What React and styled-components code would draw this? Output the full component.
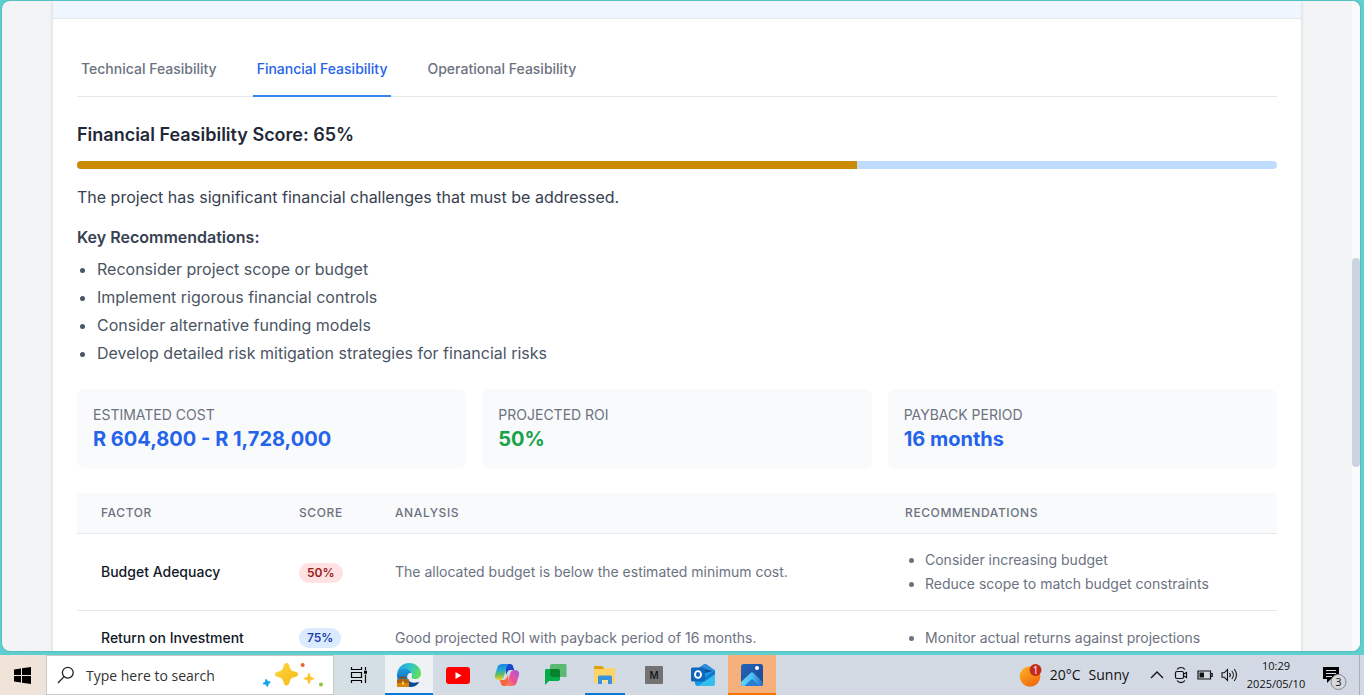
import React, { useState } from "react";
import styled, { createGlobalStyle } from "styled-components";

const GlobalStyle = createGlobalStyle`
  *, *::before, *::after { box-sizing: border-box; }
  html, body { margin: 0; padding: 0; }
  body { font-family: Inter, "Liberation Sans", sans-serif; color: #1f2937; }
  button, input { font: inherit; color: inherit; margin: 0; }
  h2, h3, p, ul, dl, dd { margin: 0; padding: 0; }
`;

const Desktop = styled.div`
  display: flex;
  flex-direction: column;
  height: 100vh;
  background: #5fcfd0;
`;

const BrowserWindow = styled.div`
  flex: 1;
  min-height: 0;
  display: flex;
  margin: 1px 4px 4px 2px;
  border-radius: 8px;
  overflow: hidden;
  background: #f3f4f6;
  box-shadow: 0 0 2px rgba(0, 60, 60, 0.35);
`;

const Page = styled.main`
  flex: 1;
  min-width: 0;
  overflow: hidden;
`;

const Container = styled.div`
  max-width: 1280px;
  margin: 0 auto;
  padding: 0 16px;
`;

const Card = styled.section`
  background: #fff;
  box-shadow: 0 0 4px rgba(0, 0, 0, 0.14);
`;

const CardBanner = styled.div`
  height: 18px;
  background: #eff6ff;
  border-bottom: 1px solid #e5e7eb;
`;

const CardBody = styled.div`
  padding: 24px;
`;

const ScrollTrack = styled.div`
  width: 8px;
  display: flex;
  flex-direction: column;
  background: #f8fafc;
  &::before { content: ""; flex: 257; }
  &::after { content: ""; flex: 184; }
`;

const ScrollThumb = styled.div`
  flex: 209;
  border-radius: 4px;
  background: #cbd5e1;
`;

const TabList = styled.div`
  display: flex;
  gap: 32px;
  border-bottom: 1px solid #e5e7eb;
`;

const Tab = styled.button`
  margin-bottom: -1px;
  padding: 16px 4px;
  border: 0;
  border-bottom: 2px solid ${(p) => (p.$active ? "#3b82f6" : "transparent")};
  background: none;
  color: ${(p) => (p.$active ? "#2563eb" : "#6b7280")};
  font-size: 14px;
  font-weight: 500;
  line-height: 20px;
  cursor: pointer;
`;

const ScoreHeading = styled.h2`
  margin-top: 24px;
  color: #1f2937;
  font-size: 18px;
  font-weight: 600;
  line-height: 28px;
`;

const Meter = styled.div`
  height: 8px;
  margin-top: 12px;
  border-radius: 4px;
  overflow: hidden;
  background: #bfdbfe;
`;

const MeterFill = styled.div`
  height: 100%;
  background: #ca8a04;
`;

const Summary = styled.p`
  margin-top: 16px;
  color: #374151;
  font-size: 16px;
  line-height: 24px;
`;

const SubHeading = styled.h3`
  margin-top: 16px;
  color: #374151;
  font-size: 16px;
  font-weight: 600;
  line-height: 24px;
`;

const BulletList = styled.ul`
  display: flex;
  flex-direction: column;
  gap: 4px;
  margin-top: ${(p) => (p.$compact ? 0 : 8)}px;
  padding-left: 20px;
  list-style: disc;
  color: ${(p) => (p.$compact ? "#6b7280" : "#4b5563")};
  font-size: ${(p) => (p.$compact ? 14 : 16)}px;
  line-height: ${(p) => (p.$compact ? 20 : 24)}px;
`;

const StatGrid = styled.dl`
  display: grid;
  grid-template-columns: repeat(3, minmax(0, 1fr));
  gap: 16px;
  margin-top: 24px;
`;

const StatCard = styled.div`
  padding: 16px;
  border-radius: 8px;
  background: #f9fafb;
`;

const StatLabel = styled.dt`
  color: #6b7280;
  font-size: 14px;
  line-height: 20px;
  text-transform: uppercase;
`;

const StatValue = styled.dd`
  color: ${(p) => (p.$positive ? "#16a34a" : "#2563eb")};
  font-size: 20px;
  font-weight: 700;
  line-height: 28px;
`;

const FactorTable = styled.table`
  width: 100%;
  margin-top: 24px;
  table-layout: fixed;
  border-spacing: 0;
  text-align: left;
`;

const HeadCell = styled.th`
  width: ${(p) => p.$width};
  padding: 12px 24px;
  border-bottom: 1px solid #e5e7eb;
  background: #f9fafb;
  color: #6b7280;
  font-size: 12px;
  font-weight: 500;
  line-height: 16px;
  letter-spacing: 0.05em;
  text-transform: uppercase;
`;

const Cell = styled.td`
  padding: 16px 24px;
  border-bottom: 1px solid #e5e7eb;
  color: #6b7280;
  font-size: 14px;
  line-height: 20px;
  white-space: nowrap;
`;

const FactorCell = styled(Cell).attrs({ as: "th", scope: "row" })`
  color: #111827;
  font-weight: 500;
`;

const Badge = styled.span`
  display: inline-flex;
  padding: 0 8px;
  border-radius: 10px;
  vertical-align: middle;
  background: ${(p) => (p.$low ? "#fee2e2" : "#dbeafe")};
  color: ${(p) => (p.$low ? "#991b1b" : "#1e40af")};
  font-size: 12px;
  font-weight: 600;
  line-height: 20px;
`;

const Taskbar = styled.footer`
  display: flex;
  height: 40px;
  background: linear-gradient(90deg, #f1e3d8 0, #eee3da 46px, #d5e0e5 334px, #d2dae3 480px, #d3d9e4 100%);
  color: #111;
  font-family: "Open Sans", "Noto Sans", sans-serif;
`;

const StartButton = styled.button`
  width: 46px;
  display: grid;
  place-items: center;
  padding: 0 2px 0 0;
  border: 0;
  background: none;
`;

const SearchBox = styled.label`
  width: 288px;
  display: flex;
  align-items: center;
  gap: 11px;
  padding: 0 9px 0 10px;
  border: 1px solid #c8c8c8;
  background: #fff;
`;

const SearchInput = styled.input`
  flex: 1;
  min-width: 0;
  padding: 2px 0 0;
  border: 0;
  outline: 0;
  background: none;
  font-size: 14px;
  line-height: 20px;
  &::placeholder { color: #333; opacity: 1; }
`;

const AppStrip = styled.nav`
  display: flex;
  gap: 1px;
`;

const AppButton = styled.button`
  width: ${(p) => (p.$wide ? 50 : 48)}px;
  height: 40px;
  display: flex;
  flex-direction: column;
  align-items: center;
  padding: 2px 0 0;
  border: 0;
  background: ${(p) => (p.$alert ? "#f6b07c" : p.$active ? "#eef2f5" : "none")};
  svg { margin: auto; }
  &::after {
    content: "";
    width: ${(p) => (p.$active || p.$alert ? 48 : 40)}px;
    height: 2px;
    background: ${(p) => (p.$alert ? "#f97400" : p.$active || p.$running ? "#0a78d6" : "transparent")};
  }
`;

const Tray = styled.div`
  display: flex;
  align-items: center;
  margin-left: auto;
  padding-right: 4px;
`;

const TrayButton = styled.button`
  width: 24px;
  height: 40px;
  display: grid;
  place-items: center;
  padding: 0;
  border: 0;
  background: none;
`;

const WeatherButton = styled.button`
  display: flex;
  align-items: center;
  gap: 8px;
  height: 40px;
  margin-right: 16px;
  padding: 0;
  border: 0;
  background: none;
  font-size: 14px;
  line-height: 20px;
`;

const Clock = styled.button`
  width: 70px;
  height: 40px;
  padding: 0;
  border: 0;
  background: none;
  font-size: 11px;
  line-height: 18px;
  text-align: center;
  span { display: block; }
`;

const NotificationButton = styled(TrayButton)`
  width: 49px;
  border-right: 1px solid #a9afb8;
`;

const WindowsIcon = () => (
  <svg width="17" height="17" viewBox="0 0 17 17" aria-hidden="true">
    <path d="M0 2.4 7 1.4V8H0zM8 1.3 17 0v8H8zM0 9h7v6.6L0 14.6zM8 9h9v8l-9-1.3z" fill="#000" />
  </svg>
);

const SearchIcon = () => (
  <svg width="18" height="18" viewBox="0 0 18 18" fill="none" stroke="#222" strokeWidth="1.3" aria-hidden="true">
    <circle cx="10.8" cy="6.7" r="5.4" />
    <path d="M7 10.6 1 17" />
  </svg>
);

const SparkleIcon = () => (
  <svg width="62" height="28" viewBox="0 0 62 28" aria-hidden="true">
    <defs>
      <linearGradient id="gold" x1="0" y1="0" x2="1" y2="1">
        <stop offset="0" stopColor="#ffd83c" />
        <stop offset="1" stopColor="#f5b617" />
      </linearGradient>
    </defs>
    <path d="M24.500 2c2 0 2.400 1.200 3 3.500 1 3.500 1.500 4 5.200 5.100 2.300.7 3.300 1.200 3.300 2.700s-1 2-3.300 2.700c-3.700 1.100-4.200 1.600-5.200 5.100-.6 2.300-1 3.500-3 3.500s-2.400-1.200-3-3.500c-1-3.500-1.500-4-5.200-5.100-2.300-.7-3.300-1.200-3.300-2.700s1-2 3.300-2.700c3.700-1.100 4.200-1.600 5.200-5.100.6-2.300 1-3.500 3-3.500z" fill="url(#gold)" />
    <path d="M47 12c1 0 1.200 3.300 1.800 3.900.6.500 3.700.7 3.700 1.700s-3.100 1.100-3.700 1.700c-.6.600-.8 3.700-1.800 3.700s-1.200-3.100-1.800-3.700c-.6-.6-3.700-.7-3.700-1.700s3.100-1.200 3.700-1.700c.6-.6.8-3.900 1.800-3.900z" fill="#ffc42b" />
    <path d="M4 18c1 0 1.300 1.700 1.900 2.100.7.400 2.600 0 2.700 1.100.1 1-1.600 1.200-2 1.900-.4.700 0 2.600-1 2.700-1.100.1-1.400-1.800-2-2.100-.8-.4-2.600 0-2.800-1-.1-1.200 1.700-1.300 2.100-2C3.200 20 3 18.100 4 18z" fill="#15a4ee" />
    <circle cx="40.700" cy="4" r="2" fill="#f1602c" />
    <circle cx="59" cy="23.500" r="2" fill="#8cc63f" />
  </svg>
);

const TaskViewIcon = () => (
  <svg width="18" height="18" viewBox="0 0 18 18" fill="none" stroke="#000" strokeWidth="1.2" aria-hidden="true">
    <path d="M1.500 1v2.500h10V1M1.500 17v-2.500h10V17M1.500 6.500h10v5h-10zM15.500 1v3M15.500 8.500V17" />
    <path d="M14 4.700h3v3h-3z" fill="#000" stroke="none" />
  </svg>
);

const EdgeIcon = () => (
  <svg width="26" height="26" viewBox="0 0 26 26" aria-hidden="true">
    <defs>
      <linearGradient id="edgeTop" x1="0" y1="0.2" x2="1" y2=".5">
        <stop offset="0" stopColor="#1b9fe0" />
        <stop offset=".5" stopColor="#2fc5cb" />
        <stop offset="1" stopColor="#63de58" />
      </linearGradient>
      <linearGradient id="edgeSide" x1="0" y1="0" x2="0" y2="1">
        <stop offset="0" stopColor="#1e9be0" />
        <stop offset="1" stopColor="#0c58a8" />
      </linearGradient>
    </defs>
    <path d="M1 12C2 5 7 1 13 1c7 0 12 5 12 10 0 4-2.500 6-6 6-2.500 0-4-.8-3.500-2 1.500-3.500-.5-6-4-6.500C6 8 2 10 1 12z" fill="url(#edgeTop)" />
    <path d="M1 12c1.500-4 5.500-6 9.500-5 3 .8 4.500 2.300 4.800 4-2.500-.5-4.300 1.300-4.100 4 .3 4.300 5.300 7 10.800 5-3 4-8 5.500-13 3.500C3 22 .500 17 1 12z" fill="url(#edgeSide)" />
    <path d="M13 20.500c3.500 1.300 7.500.8 10.500-1-2 4-6 6-10.500 5.500z" fill="#0b4a94" />
    <path d="M4.500 17.500v-2h5v2" fill="none" stroke="#8a4c0a" strokeWidth="1.300" />
    <path d="M1 17.500h12V25H1z" fill="#dc8610" />
    <path d="M1 17.500h12V21H1z" fill="#ad620b" />
    <path d="M6 19.500h2v3H6z" fill="#ffd24a" />
  </svg>
);

const YouTubeIcon = () => (
  <svg width="24" height="17" viewBox="0 0 24 17" aria-hidden="true">
    <rect width="24" height="17" rx="3" fill="#f00" />
    <path d="m9.500 5 6 3.500-6 3.500z" fill="#fff" />
  </svg>
);

const CopilotIcon = () => (
  <svg width="26" height="24" viewBox="0 0 26 24" aria-hidden="true">
    <defs>
      <linearGradient id="copLeft" x1="0" y1="0" x2="0" y2="1">
        <stop offset="0" stopColor="#1b86e8" />
        <stop offset=".35" stopColor="#22a7d8" />
        <stop offset=".65" stopColor="#5cbf62" />
        <stop offset="1" stopColor="#f5cf24" />
      </linearGradient>
      <linearGradient id="copRight" x1="1" y1="0" x2="0" y2="1">
        <stop offset="0" stopColor="#a458ee" />
        <stop offset=".55" stopColor="#f05290" />
        <stop offset="1" stopColor="#fb9a4a" />
      </linearGradient>
    </defs>
    <path d="M11 1h5c2 0 2.800 1 3.300 3l.9 3h-3.500c-2 0-3 1-3.700 3l-1 2z" fill="#1648c8" />
    <path d="M15 23h-5c-2 0-2.800-1-3.300-3l-.9-3h3.500c2 0 3-1 3.700-3l1-2z" fill="#f4683e" />
    <path d="M8.500 1H15c-2 1-2.500 3-3.200 5.500L10 13c-.8 2.800-1.800 4-4.500 4C1.500 17 .400 14.500 1 12L3.500 4C4.300 1.800 6 1 8.500 1z" fill="url(#copLeft)" />
    <path d="M17.500 23H11c2-1 2.500-3 3.200-5.500L16 11c.8-2.800 1.800-4 4.500-4 4 0 5.100 2.500 4.500 5l-2.500 8c-.8 2.200-2.500 3-5 3z" fill="url(#copRight)" />
  </svg>
);

const ChatIcon = () => (
  <svg width="24" height="24" viewBox="0 0 24 24" aria-hidden="true">
    <path d="M2 6h12c1 0 2 .7 2 2v8c0 1.300-.8 2-2 2H5l-4 4V8c0-1 .300-2 1-2z" fill="#05ac48" />
    <path d="M8 1h13c1 0 1.500.5 1.500 1.500V14H8c-1.500 0-2-1-2-2V3c0-1.200.8-2 2-2z" fill="#5bb974" />
    <path d="M6 6h8c1.300 0 2 .7 2 2v6H8c-1.500 0-2-1-2-2z" fill="#07832e" />
  </svg>
);

const FolderIcon = () => (
  <svg width="22" height="20" viewBox="0 0 22 20" aria-hidden="true">
    <path d="M0 1h8l2 2h11v5H0z" fill="#dda117" />
    <path d="M0 4h9l2-1h10v15H0z" fill="#ffd466" />
    <path d="M4 19v-7c0-1 .700-1.500 1.500-1.500h11c.8 0 1.500.5 1.500 1.500v7h-4v-4H8v4z" fill="#3992dc" />
    <path d="M8 15h6v3H8z" fill="#f8df9f" />
  </svg>
);

const LetterTile = styled.span`
  width: 18px;
  height: 18px;
  margin: auto;
  border-radius: 1px;
  background: #737373;
  color: #111;
  font-family: Inter, sans-serif;
  font-size: 10px;
  font-weight: 500;
  line-height: 18px;
`;

const OutlookIcon = () => (
  <svg width="26" height="24" viewBox="0 0 26 24" aria-hidden="true">
    <path d="M5 7.500 13.500 1.600c1-.7 2-.7 3 0L25 7.500V12L5 14z" fill="#1e83d4" />
    <path d="m14 1.500 1-.4c.5 0 1 .2 1.500.5L25 7.500 18 12l-8-6z" fill="#2d8fdc" />
    <path d="m15 6 8 2-6 4-5-3z" fill="#0d4f9c" />
    <path d="M5 10h10l10-2.500V20c0 2-1 3-3 3H8c-2 0-3-1-3-3z" fill="#1798e4" />
    <path d="m8 23 17-12.500V20c0 2-1 3-3 3z" fill="#35bdf0" />
    <path d="m15 14 10-6.500v3.800L15 18z" fill="#1278cc" />
    <rect x="1" y="4.500" width="14" height="14" rx="1.500" fill="#0f66bb" />
    <ellipse cx="8" cy="11.500" rx="3" ry="3.400" fill="none" stroke="#fff" strokeWidth="1.900" />
  </svg>
);

const PhotosIcon = () => (
  <svg width="22" height="22" viewBox="0 0 22 22" aria-hidden="true">
    <defs>
      <linearGradient id="sky" x1="0" y1="0" x2="1" y2="1">
        <stop offset="0" stopColor="#2464ba" />
        <stop offset="1" stopColor="#1d4690" />
      </linearGradient>
      <linearGradient id="slope" x1="0" y1="0" x2="1" y2="0">
        <stop offset="0" stopColor="#62d4f8" />
        <stop offset=".5" stopColor="#4fc0f2" />
        <stop offset="1" stopColor="#2467c4" />
      </linearGradient>
      <clipPath id="photoFrame"><rect width="22" height="22" rx="2.500" /></clipPath>
    </defs>
    <g clipPath="url(#photoFrame)">
      <rect width="22" height="22" fill="url(#sky)" />
      <path d="M0 18 9.500 9c1-1 2-1 3 0L22 18v4H0z" fill="url(#slope)" />
      <path d="m3.500 22 6.500-6.300c.7-.7 1.500-.7 2.200 0L18.500 22z" fill="#2a7fd4" />
      <circle cx="16" cy="4" r="2" fill="#fff" />
    </g>
  </svg>
);

const WeatherIcon = () => (
  <svg width="24" height="26" viewBox="0 0 24 26" aria-hidden="true">
    <defs>
      <linearGradient id="sun" x1="0" y1="0" x2=".6" y2="1">
        <stop offset="0" stopColor="#fbb829" />
        <stop offset="1" stopColor="#f26a0b" />
      </linearGradient>
    </defs>
    <circle cx="12" cy="14.500" r="10.300" fill="url(#sun)" />
    <circle cx="17.500" cy="8" r="6" fill="#c42b1c" />
    <text x="17.500" y="11.500" textAnchor="middle" fontSize="10" fontFamily="Open Sans, sans-serif" fill="#fff">1</text>
  </svg>
);

const ChevronIcon = () => (
  <svg width="14" height="8" viewBox="0 0 14 8" fill="none" stroke="#111" strokeWidth="1.300" aria-hidden="true">
    <path d="m1 7 6-6 6 6" />
  </svg>
);

const MeetIcon = () => (
  <svg width="14" height="18" viewBox="0 0 14 18" fill="none" stroke="#111" strokeWidth="1.200" aria-hidden="true">
    <path d="M3 3.500c2-2.700 6-2.700 8 0M3 14.500c2 2.700 6 2.700 8 0" />
    <rect x="1.500" y="5.500" width="8" height="7" rx="1.500" />
    <path d="m9.500 8 3-1.500v5l-3-1.500" />
  </svg>
);

const BatteryIcon = () => (
  <svg width="16" height="10" viewBox="0 0 16 10" fill="none" stroke="#111" strokeWidth="1.200" aria-hidden="true">
    <path d="M1 1h12.500v8H1zM14 3.500h1.200v3H14" />
    <path d="M2.500 2.500H7v5H2.500z" fill="#111" stroke="none" />
  </svg>
);

const SpeakerIcon = () => (
  <svg width="17" height="14" viewBox="0 0 17 14" fill="none" stroke="#111" strokeWidth="1.100" aria-hidden="true">
    <path d="M1 4.800h2.200L6.500 1.500v11L3.200 9.200H1zM8.500 5c1 1.100 1 2.900 0 4M10.800 3c2 2.300 2 5.700 0 8M13.200 1c3 3.500 3 8.500 0 12" />
  </svg>
);

const NotificationIcon = () => (
  <svg width="26" height="32" viewBox="0 0 26 32" aria-hidden="true">
    <path d="M1 8h16v12H9l-4 4v-4H1z" fill="#000" />
    <path d="M4 11.500h10M4 14.500h10M4 17.500h6" stroke="#d3d9e4" />
    <circle cx="16.500" cy="23" r="7.500" fill="#d6d8db" stroke="#85898f" />
    <text x="16.500" y="27" textAnchor="middle" fontSize="11" fontFamily="Open Sans, sans-serif" fill="#111">3</text>
  </svg>
);

const TABS = ["Technical Feasibility", "Financial Feasibility", "Operational Feasibility"];

const RECOMMENDATIONS = [
  "Reconsider project scope or budget",
  "Implement rigorous financial controls",
  "Consider alternative funding models",
  "Develop detailed risk mitigation strategies for financial risks",
];

const STATS = [
  { label: "Estimated Cost", value: "R 604,800 - R 1,728,000" },
  { label: "Projected ROI", value: "50%", positive: true },
  { label: "Payback Period", value: "16 months" },
];

const COLUMNS = [
  { title: "Factor", width: "198px" },
  { title: "Score", width: "96px" },
  { title: "Analysis", width: "auto" },
  { title: "Recommendations", width: "33%" },
];

const FACTORS = [
  {
    name: "Budget Adequacy",
    score: 50,
    analysis: "The allocated budget is below the estimated minimum cost.",
    actions: ["Consider increasing budget", "Reduce scope to match budget constraints"],
  },
  {
    name: "Return on Investment",
    score: 75,
    analysis: "Good projected ROI with payback period of 16 months.",
    actions: ["Monitor actual returns against projections"],
  },
];

const APPS = [
  { name: "Task View", icon: <TaskViewIcon />, wide: true },
  { name: "Microsoft Edge", icon: <EdgeIcon />, active: true },
  { name: "YouTube", icon: <YouTubeIcon /> },
  { name: "Copilot", icon: <CopilotIcon /> },
  { name: "Google Chat", icon: <ChatIcon /> },
  { name: "File Explorer", icon: <FolderIcon />, running: true },
  { name: "M", icon: <LetterTile>M</LetterTile> },
  { name: "Outlook", icon: <OutlookIcon /> },
  { name: "Photos", icon: <PhotosIcon />, alert: true },
];

function FeasibilityReport() {
  const [activeTab, setActiveTab] = useState(1);
  return (
    <Card>
      <CardBanner />
      <CardBody>
        <TabList role="tablist">
          {TABS.map((label, i) => (
            <Tab key={label} type="button" role="tab" aria-selected={i === activeTab} $active={i === activeTab} onClick={() => setActiveTab(i)}>
              {label}
            </Tab>
          ))}
        </TabList>
        <ScoreHeading>Financial Feasibility Score: 65%</ScoreHeading>
        <Meter role="progressbar" aria-label="Financial feasibility score" aria-valuenow={65} aria-valuemin={0} aria-valuemax={100}>
          <MeterFill style={{ width: "65%" }} />
        </Meter>
        <Summary>The project has significant financial challenges that must be addressed.</Summary>
        <SubHeading>Key Recommendations:</SubHeading>
        <BulletList>
          {RECOMMENDATIONS.map((text) => <li key={text}>{text}</li>)}
        </BulletList>
        <StatGrid>
          {STATS.map((s) => (
            <StatCard key={s.label}>
              <StatLabel>{s.label}</StatLabel>
              <StatValue $positive={s.positive}>{s.value}</StatValue>
            </StatCard>
          ))}
        </StatGrid>
        <FactorTable>
          <thead>
            <tr>
              {COLUMNS.map((c) => <HeadCell key={c.title} scope="col" $width={c.width}>{c.title}</HeadCell>)}
            </tr>
          </thead>
          <tbody>
            {FACTORS.map((f) => (
              <tr key={f.name}>
                <FactorCell>{f.name}</FactorCell>
                <Cell><Badge $low={f.score < 60}>{f.score}%</Badge></Cell>
                <Cell>{f.analysis}</Cell>
                <Cell>
                  <BulletList $compact>
                    {f.actions.map((a) => <li key={a}>{a}</li>)}
                  </BulletList>
                </Cell>
              </tr>
            ))}
          </tbody>
        </FactorTable>
      </CardBody>
    </Card>
  );
}

export default function App() {
  return (
    <Desktop>
      <GlobalStyle />
      <BrowserWindow>
        <Page>
          <Container>
            <FeasibilityReport />
          </Container>
        </Page>
        <ScrollTrack><ScrollThumb /></ScrollTrack>
      </BrowserWindow>
      <Taskbar>
        <StartButton type="button" aria-label="Start"><WindowsIcon /></StartButton>
        <SearchBox>
          <SearchIcon />
          <SearchInput type="text" placeholder="Type here to search" aria-label="Search" />
          <SparkleIcon />
        </SearchBox>
        <AppStrip aria-label="Apps">
          {APPS.map((a) => (
            <AppButton key={a.name} type="button" aria-label={a.name} $wide={a.wide} $active={a.active} $running={a.running} $alert={a.alert}>
              {a.icon}
            </AppButton>
          ))}
        </AppStrip>
        <Tray>
          <WeatherButton type="button">
            <WeatherIcon />
            <span>20°C</span>
            <span>Sunny</span>
          </WeatherButton>
          <TrayButton type="button" aria-label="Show hidden icons"><ChevronIcon /></TrayButton>
          <TrayButton type="button" aria-label="Meet now"><MeetIcon /></TrayButton>
          <TrayButton type="button" aria-label="Battery"><BatteryIcon /></TrayButton>
          <TrayButton type="button" aria-label="Volume"><SpeakerIcon /></TrayButton>
          <Clock type="button">
            <span>10:29</span>
            <span>2025/05/10</span>
          </Clock>
          <NotificationButton type="button" aria-label="Notifications"><NotificationIcon /></NotificationButton>
        </Tray>
      </Taskbar>
    </Desktop>
  );
}
